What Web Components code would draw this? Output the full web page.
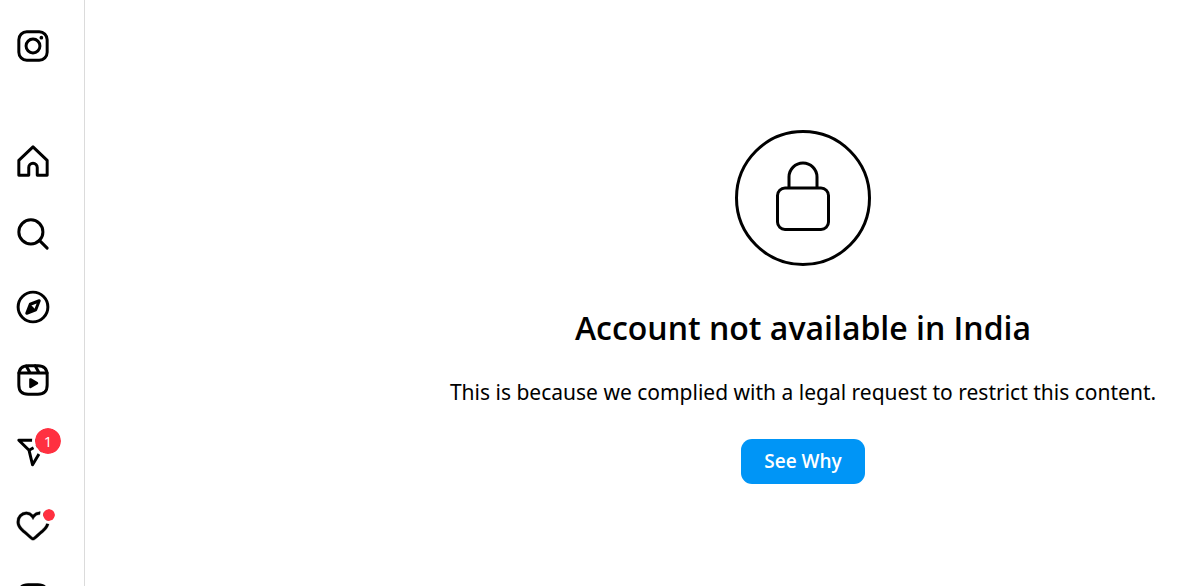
<!DOCTYPE html>
<html lang="en">
<head>
<meta charset="utf-8">
<meta name="viewport" content="width=device-width, initial-scale=1">
<title>Account not available</title>
<style>
  body { margin: 0; background: #fff; color: #000; font-family: "Open Sans", "Noto Sans", sans-serif; }
</style>
</head>
<body>
<app-shell>
  <side-nav slot="nav">
    <nav-item icon="logo" label="Instagram" slot="brand"></nav-item>
    <nav-item icon="home" label="Home"></nav-item>
    <nav-item icon="search" label="Search"></nav-item>
    <nav-item icon="explore" label="Explore"></nav-item>
    <nav-item icon="reels" label="Reels"></nav-item>
    <nav-item icon="messages" label="Messages"><count-badge>1</count-badge></nav-item>
    <nav-item icon="heart" label="Notifications"><count-badge dot></count-badge></nav-item>
    <nav-item icon="create" label="Create"></nav-item>
  </side-nav>
  <restricted-notice>
    <span slot="title">Account not available in India</span>
    <span slot="reason">This is because we complied with a legal request to restrict this content.</span>
    <action-button>See Why</action-button>
  </restricted-notice>
</app-shell>

<script>
const frame = '<path d="M2 12v3.45c0 2.849.698 4.005 1.606 4.944.94.909 2.098 1.608 4.946 1.608h6.896c2.848 0 4.006-.7 4.946-1.608C21.302 19.455 22 18.3 22 15.45V8.552c0-2.849-.698-4.006-1.606-4.945C19.454 2.7 18.296 2 15.448 2H8.552c-2.848 0-4.006.699-4.946 1.607C2.698 4.547 2 5.703 2 8.552Z"/>';
const icons = {
  logo: '<rect x="2" y="2" width="20" height="20" rx="5.6"/><circle cx="12" cy="12" r="4.9"/><circle cx="17.9" cy="6.1" r="1.3" fill="currentColor" stroke="none"/>',
  home: '<path d="M9.005 16.545a2.997 2.997 0 0 1 2.997-2.997A2.997 2.997 0 0 1 15 16.545V22h7V11.543L12 2 2 11.543V22h7.005Z"/>',
  search: '<circle cx="10.5" cy="10.5" r="8.5"/><path d="M16.511 16.511 22 22"/>',
  explore: '<path d="m13.941 13.953-6.36 2.471 2.479-6.368 6.36-2.471Z"/><path d="m10.06 10.056 3.889 3.889-6.368 2.479Z" fill="currentColor" stroke="none"/><circle cx="12" cy="12" r="10.5"/>',
  reels: frame + '<path d="M2.049 7.002H21.95M13.504 2.001l2.858 5.001M7.207 2.11l2.795 4.892"/><path fill="currentColor" stroke="none" d="M9.763 17.664a.908.908 0 0 1-.454-.787V11.63a.909.909 0 0 1 1.364-.788l4.545 2.624a.909.909 0 0 1 0 1.575l-4.545 2.624a.92.92 0 0 1-.91 0Z"/>',
  messages: '<path d="M22 3 9.218 10.083M11.698 20.334 22 3.001H2l7.218 7.083Z"/>',
  heart: '<path fill="currentColor" stroke-width=".2" d="M16.792 3.904A4.989 4.989 0 0 1 21.5 9.122c0 3.072-2.652 4.959-5.197 7.222-2.512 2.243-3.865 3.469-4.303 3.752-.477-.309-2.143-1.823-4.303-3.752C5.141 14.072 2.5 12.167 2.5 9.122a4.989 4.989 0 0 1 4.708-5.218 4.21 4.21 0 0 1 3.675 1.941c.84 1.175.98 1.763 1.12 1.763s.278-.588 1.11-1.766a4.17 4.17 0 0 1 3.679-1.938m0-2a6.04 6.04 0 0 0-4.797 2.127 6.052 6.052 0 0 0-4.787-2.127A6.985 6.985 0 0 0 .5 9.122c0 3.61 2.55 5.827 5.015 7.97.283.246.569.494.853.747l1.027.918a44.998 44.998 0 0 0 3.518 3.018 2 2 0 0 0 2.174 0 45.263 45.263 0 0 0 3.626-3.115l.922-.824c.293-.26.59-.519.885-.774 2.334-2.025 4.98-4.32 4.98-7.94a6.985 6.985 0 0 0-6.708-7.218Z"/>',
  create: frame + '<path d="M6.545 12.001h10.91M12.003 6.545v10.91"/>'
};

function define(name, render) {
  customElements.define(name, class extends HTMLElement {
    constructor() {
      super();
      this.attachShadow({ mode: "open" });
    }
    connectedCallback() {
      this.shadowRoot.innerHTML = render(this);
    }
  });
}

define("app-shell", () => `
  <style>
    :host { display: grid; grid-template-columns: auto minmax(0, 1fr); height: 100vh; overflow: hidden; }
  </style>
  <slot name="nav"></slot>
  <main><slot></slot></main>`);

define("side-nav", () => `
  <style>
    :host { display: block; min-height: 0; border-right: 1px solid #dbdbdb; overflow: hidden; }
    nav { display: flex; flex-direction: column; gap: 81px; padding: 29px 34px 0 16px; }
    .links { display: flex; flex-direction: column; gap: 39px; }
  </style>
  <nav aria-label="Main">
    <slot name="brand"></slot>
    <div class="links"><slot></slot></div>
  </nav>`);

define("nav-item", el => `
  <style>
    :host { display: block; }
    a { display: block; position: relative; width: 34px; height: 34px; color: #000; text-decoration: none; }
    svg { display: block; width: 100%; height: 100%; fill: none; stroke: currentColor; stroke-width: 2.1; stroke-linecap: round; stroke-linejoin: round; }
  </style>
  <a href="#" aria-label="${el.getAttribute("label")}">
    <svg viewBox="0 0 24 24" aria-hidden="true">${icons[el.getAttribute("icon")]}</svg>
    <slot></slot>
  </a>`);

define("count-badge", () => `
  <style>
    :host { position: absolute; top: -11px; left: 16px; box-sizing: content-box; width: 26px; height: 26px; border: 3px solid #fff; border-radius: 50%; background: #ff3040; background-clip: padding-box; color: #fff; font-size: 15px; line-height: 26px; text-align: center; }
    :host([dot]) { top: -3px; left: 24px; width: 12px; height: 12px; }
  </style>
  <slot></slot>`);

define("restricted-notice", () => `
  <style>
    :host { display: flex; flex-direction: column; align-items: center; padding: 130px 0 0 321px; text-align: center; }
    svg { display: block; width: 136px; height: 136px; fill: none; stroke: #000; stroke-width: 3; }
    h1 { margin: 38px 0 0; font-size: 32px; line-height: 48px; font-weight: 600; white-space: nowrap; }
    p { margin: 24px 0 0; font-family: "Noto Sans", sans-serif; font-size: 21px; line-height: 32px; white-space: nowrap; }
    .action { margin-top: 31px; }
  </style>
  <svg viewBox="0 0 136 136" aria-hidden="true">
    <circle cx="68" cy="68" r="66.5"/>
    <rect x="42.5" y="58" width="51" height="41.5" rx="7.5"/>
    <path d="M54 58V47a14 14 0 0 1 28 0V58"/>
  </svg>
  <h1><slot name="title"></slot></h1>
  <p><slot name="reason"></slot></p>
  <div class="action"><slot></slot></div>`);

define("action-button", () => `
  <style>
    :host { display: block; }
    button { display: block; margin: 0; padding: 0 23px; border: 0; border-radius: 11px; background: #0095f6; color: #fff; font: inherit; font-size: 19px; font-weight: 600; line-height: 45px; cursor: pointer; }
  </style>
  <button type="button"><slot></slot></button>`);
</script>
</body>
</html>
